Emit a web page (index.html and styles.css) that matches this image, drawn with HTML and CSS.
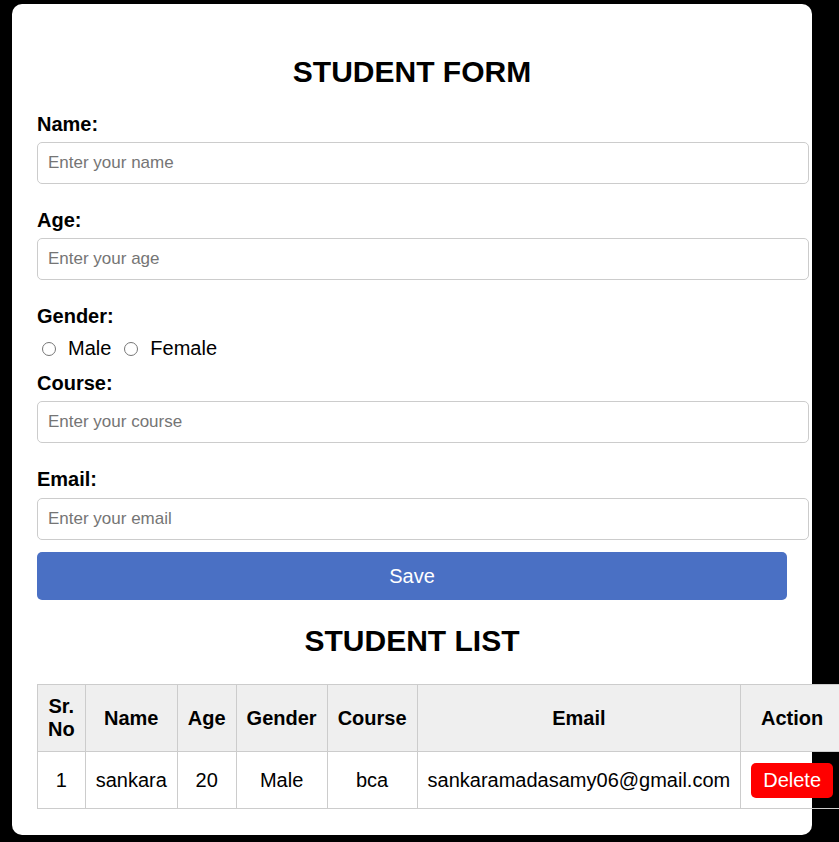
FILE: index.html
```html
<!DOCTYPE html>
<html lang="en">
<head>
<meta charset="UTF-8">
<title>Student Form</title>
<link rel="stylesheet" href="styles.css">
</head>
<body>
<div class="card">
  <h2 class="title">STUDENT FORM</h2>
  <form class="form">
    <label class="field-label" for="name">Name:</label>
    <input class="text-input" type="text" id="name" placeholder="Enter your name">

    <label class="field-label" for="age">Age:</label>
    <input class="text-input" type="text" id="age" placeholder="Enter your age">

    <label class="field-label">Gender:</label>
    <div class="radio-row">
      <input class="radio" type="radio" name="gender" id="male"><label class="radio-label" for="male">Male</label>
      <input class="radio" type="radio" name="gender" id="female"><label class="radio-label" for="female">Female</label>
    </div>

    <label class="field-label" for="course">Course:</label>
    <input class="text-input" type="text" id="course" placeholder="Enter your course">

    <label class="field-label email-label" for="email">Email:</label>
    <input class="text-input last" type="text" id="email" placeholder="Enter your email">

    <button class="save-btn" type="button">Save</button>
  </form>

  <h2 class="title list-title">STUDENT LIST</h2>
  <table class="student-table">
    <thead>
      <tr>
        <th>Sr. No</th>
        <th>Name</th>
        <th>Age</th>
        <th>Gender</th>
        <th>Course</th>
        <th>Email</th>
        <th>Action</th>
      </tr>
    </thead>
    <tbody>
      <tr>
        <td>1</td>
        <td>sankara</td>
        <td>20</td>
        <td>Male</td>
        <td>bca</td>
        <td>sankaramadasamy06@gmail.com</td>
        <td><button class="delete-btn" type="button">Delete</button></td>
      </tr>
    </tbody>
  </table>
</div>
</body>
</html>
```

FILE: styles.css
```css
html, body {
  overflow: hidden;
}

body {
  margin: 0;
  background: #000;
  font-family: "Liberation Sans", Arial, sans-serif;
  color: #000;
}

.card {
  width: 750px;
  margin: 4px 0 0 12px;
  padding: 25px 25px 26px;
  background: #fff;
  border-radius: 10px;
}

.title {
  margin: 26px 0 24px;
  font-size: 30px;
  font-weight: bold;
  text-align: center;
  line-height: 34px;
}

.list-title {
  margin: 24px 0 26px;
}

.form {
  display: flex;
  flex-direction: column;
  align-items: flex-start;
}

.field-label {
  display: block;
  font-size: 20px;
  font-weight: bold;
  line-height: 23px;
  margin-bottom: 6px;
}

.email-label {
  margin-bottom: 7px;
}

.text-input {
  box-sizing: content-box;
  width: 750px;
  height: 20px;
  padding: 10px;
  border: 1px solid #ccc;
  border-radius: 5px;
  font-family: "Liberation Sans", Arial, sans-serif;
  font-size: 17px;
  margin: 0 0 25px;
  outline: none;
}

.text-input::placeholder {
  color: #757575;
}

.text-input.last {
  margin-bottom: 12px;
}

.radio-row {
  display: flex;
  align-items: center;
  margin: 3px 0 12px;
  height: 23px;
  font-size: 20px;
}

.radio {
  width: 14px;
  height: 14px;
  margin: 0 0 0 5px;
}

.radio-label {
  margin-left: 12px;
  line-height: 23px;
}

.radio-label + .radio {
  margin-left: 13px;
}

.save-btn {
  width: 100%;
  height: 48px;
  border: none;
  border-radius: 5px;
  background: #4a70c4;
  color: #fff;
  font-family: "Liberation Sans", Arial, sans-serif;
  font-size: 20px;
}

.student-table {
  width: 100%;
  border-collapse: collapse;
  font-size: 20px;
}

.student-table th,
.student-table td {
  border: 1px solid #ccc;
  padding: 10px;
  text-align: center;
  line-height: 23px;
}

.student-table td {
  padding: 11px 10px 10px;
}

.student-table th {
  background: #efefef;
  font-weight: bold;
}

.delete-btn {
  border: none;
  border-radius: 5px;
  background: #ff0000;
  color: #fff;
  font-family: "Liberation Sans", Arial, sans-serif;
  font-size: 20px;
  line-height: 23px;
  padding: 6px 12px;
  vertical-align: middle;
}
```
